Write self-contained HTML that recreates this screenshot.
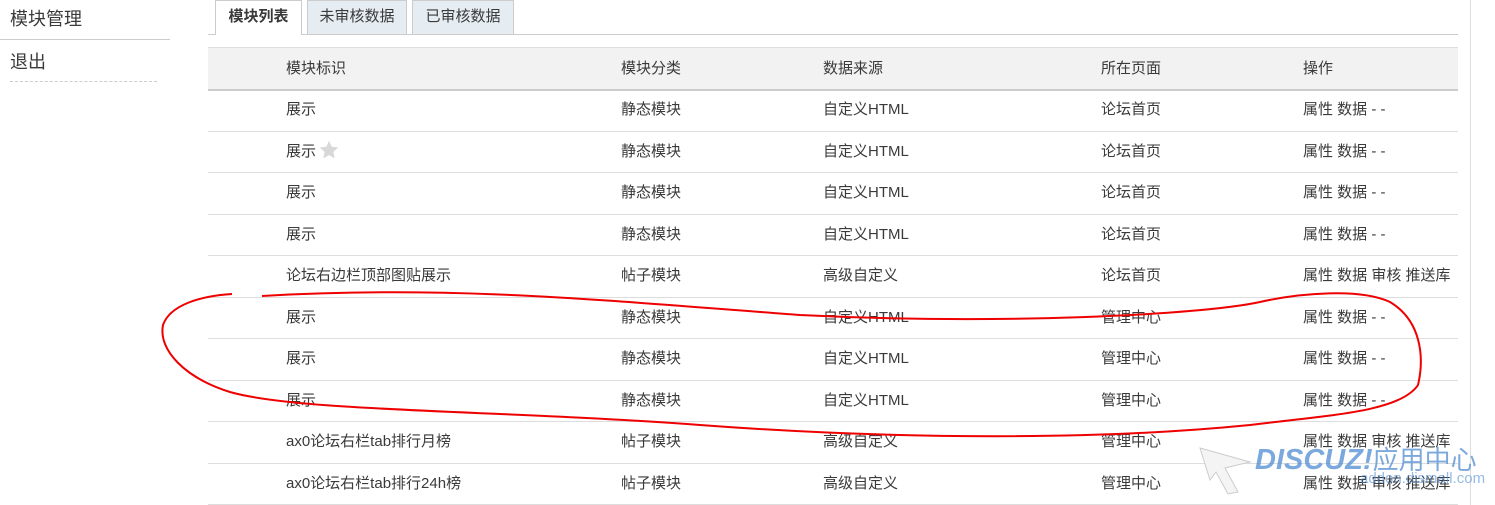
<!DOCTYPE html>
<html><head><meta charset="utf-8"><style>
body{margin:0;width:1495px;height:505px;background:#fff;font-family:"Liberation Sans","Noto Sans CJK SC",sans-serif;font-size:15px;color:#3a3a3a;position:relative;overflow:hidden}
.a{position:absolute;white-space:nowrap}
.tab{position:absolute;top:0;height:34px;line-height:32px;text-align:center;font-size:15px;border:1px solid #ccc;border-bottom:none;box-sizing:border-box}
.row{position:absolute;left:208px;width:1250px;height:41.5px;border-bottom:1px solid #ddd}
.row span{position:absolute;top:9px}
</style></head><body>
<div class="a" style="left:10px;top:5px;font-size:18px">模块管理</div>
<div class="a" style="left:0;top:39px;width:170px;border-top:1px solid #ccc"></div>
<div class="a" style="left:10px;top:48px;font-size:18px">退出</div>
<div class="a" style="left:10px;top:81px;width:147px;border-top:1px dashed #ccc"></div>
<div class="a" style="left:208px;top:34px;width:1250px;border-top:1px solid #ccc"></div>
<div class="tab" style="left:215px;width:87px;background:#fff;font-weight:bold;height:35px">模块列表</div>
<div class="tab" style="left:307px;width:100px;background:#e5ecf2">未审核数据</div>
<div class="tab" style="left:412px;width:102px;background:#e5ecf2">已审核数据</div>
<div class="a" style="left:1470px;top:0;height:505px;border-left:1px solid #ddd"></div>
<div class="a" style="left:208px;top:47px;width:1250px;height:41px;background:#f2f2f2;border-top:1px solid #ddd;border-bottom:2px solid #ccc"></div>
<div class="a" style="left:286px;top:57px">模块标识</div><div class="a" style="left:621px;top:57px">模块分类</div><div class="a" style="left:823px;top:57px">数据来源</div><div class="a" style="left:1101px;top:57px">所在页面</div><div class="a" style="left:1303px;top:57px">操作</div>
<div id="rows"></div>
<script>
var d=[["展示","静态模块","自定义HTML","论坛首页","属性 数据 - -"],["展示 ","静态模块","自定义HTML","论坛首页","属性 数据 - -"],["展示","静态模块","自定义HTML","论坛首页","属性 数据 - -"],["展示","静态模块","自定义HTML","论坛首页","属性 数据 - -"],["论坛右边栏顶部图贴展示","帖子模块","高级自定义","论坛首页","属性 数据 审核 推送库"],["展示","静态模块","自定义HTML","管理中心","属性 数据 - -"],["展示","静态模块","自定义HTML","管理中心","属性 数据 - -"],["展示","静态模块","自定义HTML","管理中心","属性 数据 - -"],["ax0论坛右栏tab排行月榜","帖子模块","高级自定义","管理中心","属性 数据 审核 推送库"],["ax0论坛右栏tab排行24h榜","帖子模块","高级自定义","管理中心","属性 数据 审核 推送库"]];
var x=[78,413,615,893,1095],h="";
d.forEach(function(r,i){h+='<div class="row" style="top:'+(89+i*41.5)+'px">';r.forEach(function(c,j){h+='<span style="left:'+x[j]+'px">'+c+'</span>'});h+='</div>'});
document.getElementById('rows').innerHTML=h;
</script>
<svg class="a" style="left:318px;top:139px" width="22" height="22" viewBox="0 0 24 24"><path d="M12 2l3 6.5 7 .8-5.2 4.8 1.4 7L12 17.6 5.8 21.1l1.4-7L2 9.3l7-.8z" fill="#d8d8d8"/></svg>
<svg class="a" style="left:0;top:0" width="1495" height="505"><path d="M232 294C200 296 170 305 163 325C158 350 185 378 230 392C300 412 500 410 700 425C900 440 1100 440 1250 425C1330 415 1400 412 1418 385C1425 355 1420 320 1390 302C1360 288 1300 293 1260 302C1200 315 1000 325 800 315C600 300 450 285 262 296" fill="none" stroke="#e00" stroke-width="2"/>
<path d="M1200 448L1250 462 1225 468 1238 492 1228 494 1216 472 1210 480Z" fill="#f4f4f4" stroke="#ccc"/></svg>
<div class="a" style="left:1255px;top:440px;font-size:29px;font-style:italic;font-weight:bold;color:rgba(80,140,210,.75)">DISCUZ!<span style="font-style:normal;font-weight:normal;font-size:26px">应用中心</span></div>
<div class="a" style="left:1360px;top:470px;font-size:15px;color:rgba(80,140,210,.6)">addon.dismall.com</div>
</body></html>
